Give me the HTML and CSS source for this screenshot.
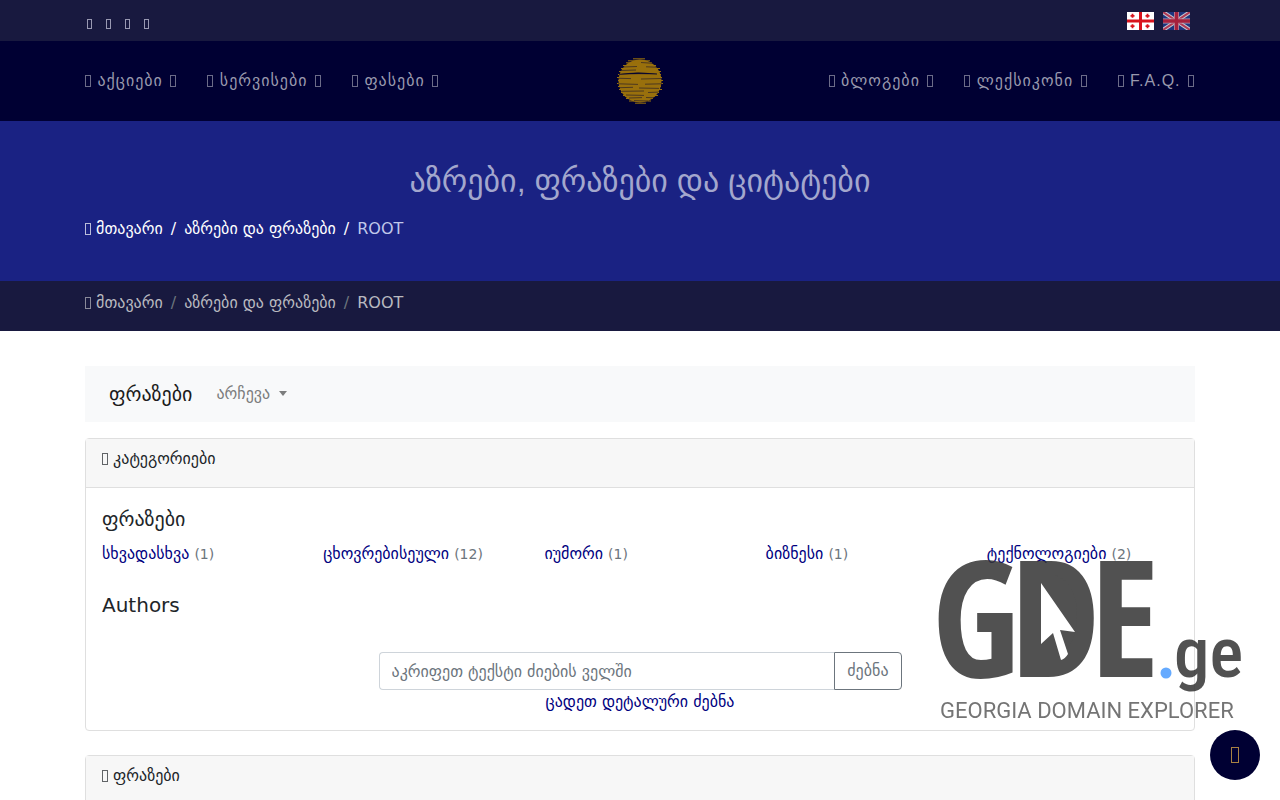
FILE: index.html
```
<!DOCTYPE html>
<html lang="ka">
<head>
  <meta charset="UTF-8">
  <meta name="viewport" content="width=device-width, initial-scale=1">
  <title>აზრები, ფრაზები და ციტატები</title>
  <link rel="stylesheet" href="styles.css">
</head>
<body>

  <!-- Top bar -->
  <div class="topbar">
    <div class="container topbar-inner">
      <div class="social">
        <a href="#" aria-label="Facebook"><i class="glyph"></i></a>
        <a href="#" aria-label="Twitter"><i class="glyph"></i></a>
        <a href="#" aria-label="YouTube"><i class="glyph"></i></a>
        <a href="#" aria-label="Instagram"><i class="glyph"></i></a>
      </div>
      <div class="langs">
        <a href="#" aria-label="ქართული">
          <svg width="27" height="18" viewBox="0 0 27 18">
            <rect width="27" height="18" fill="#fff"/>
            <path d="M12 0h3v18h-3zM0 7.5h27v3H0z" fill="#d9141e"/>
            <path d="M4.600 1.800h1.800v1.100h1.100v1.800H6.400v1.100H4.600V4.700H3.500V2.900h1.100zM19.600 1.800h1.800v1.100h1.100v1.800h-1.100v1.100h-1.800V4.700h-1.100V2.900h1.100zM4.600 12.200h1.800v1.100h1.100v1.800H6.400v1.100H4.600v-1.100H3.500v-1.800h1.100zM19.600 12.200h1.800v1.100h1.100v1.800h-1.100v1.100h-1.800v-1.100h-1.100v-1.800h1.100z" fill="#d9141e"/>
          </svg>
        </a>
        <a href="#" class="lang-off" aria-label="English">
          <svg width="27" height="18" viewBox="0 0 27 18">
            <rect width="27" height="18" fill="#1c3f94"/>
            <path d="M0 0l27 18M27 0L0 18" stroke="#fff" stroke-width="4"/>
            <path d="M0 0l27 18M27 0L0 18" stroke="#e0435a" stroke-width="2"/>
            <path d="M13.500 0v18M0 9h27" stroke="#f3c3d0" stroke-width="5"/>
            <path d="M13.500 0v18M0 9h27" stroke="#d5233c" stroke-width="3.600"/>
          </svg>
        </a>
      </div>
    </div>
  </div>

  <!-- Main menu -->
  <nav class="menu">
    <div class="container menu-inner">
      <div class="menu-side">
        <a href="#"><i class="glyph"></i> აქციები <i class="glyph"></i></a>
        <a href="#"><i class="glyph"></i> სერვისები <i class="glyph"></i></a>
        <a href="#"><i class="glyph"></i> ფასები <i class="glyph"></i></a>
      </div>
      <a href="#" class="logo" aria-label="მთავარი">
        <svg width="46" height="46" viewBox="0 0 46 46">
          <circle cx="23" cy="23" r="21.500" fill="#99700c"/>
          <g stroke="#99700c" stroke-width="1">
            <path d="M16 .800h12M11 2.800h22M9 4.800h26M6 7.500h33M4 10.500h39M2 13.500h42M1 16.500h43M0 19.500h45M1 22.500h45M0 25.500h46M1 28.500h43M2 31.500h43M4 34.500h38M6 37.500h35M9 40.500h27M12 43h22M18 45.200h11"/>
          </g>
          <g stroke="#000033" stroke-width=".500">
            <path d="M24 4.500l12 .800M6 9l14-.500M29 8.800l11 .400M3 12.500l16-.500M1 25.800l20 .600M28 26.200l17-.400M2 20.300l12 .300M24 21l20-.500M2 29.700l14-.400M22 30l20 .400M5 33.300l22-.300M31 34.500l10-.400M9 37l18 .400M12 40l13-.400M29 39.500l8 .300M17 42.600l14 .400"/>
            <path d="M2 16.300q18-3 38-.300q-18-.800-38 .300z" fill="#000033"/>
          </g>
        </svg>
      </a>
      <div class="menu-side menu-right">
        <a href="#"><i class="glyph"></i> ბლოგები <i class="glyph"></i></a>
        <a href="#"><i class="glyph"></i> ლექსიკონი <i class="glyph"></i></a>
        <a href="#"><i class="glyph"></i> F.A.Q. <i class="glyph"></i></a>
      </div>
    </div>
  </nav>

  <!-- Page title -->
  <header class="hero">
    <div class="container">
      <h1>აზრები, ფრაზები და ციტატები</h1>
      <ol class="breadcrumb">
        <li><a href="#"><i class="glyph"></i> მთავარი</a></li>
        <li><a href="#">აზრები და ფრაზები</a></li>
        <li class="active">ROOT</li>
      </ol>
    </div>
  </header>
  <div class="crumbbar">
    <div class="container">
      <ol class="breadcrumb">
        <li><a href="#"><i class="glyph"></i> მთავარი</a></li>
        <li><a href="#">აზრები და ფრაზები</a></li>
        <li>ROOT</li>
      </ol>
    </div>
  </div>

  <main class="container content">
    <nav class="subnav">
      <a href="#" class="brand">ფრაზები</a>
      <a href="#" class="dropdown">არჩევა</a>
    </nav>

    <section class="card">
      <div class="card-header"><i class="glyph"></i> კატეგორიები</div>
      <div class="card-body">
        <h2>ფრაზები</h2>
        <div class="categories">
          <div><a href="#">სხვადასხვა</a> <small>(1)</small></div>
          <div><a href="#">ცხოვრებისეული</a> <small>(12)</small></div>
          <div><a href="#">იუმორი</a> <small>(1)</small></div>
          <div><a href="#">ბიზნესი</a> <small>(1)</small></div>
          <div><a href="#">ტექნოლოგიები</a> <small>(2)</small></div>
        </div>
        <h2>Authors</h2>
        <form class="search">
          <div class="search-group">
            <input type="text" aria-label="ძებნა" placeholder="აკრიფეთ ტექსტი ძიების ველში">
            <button type="button">ძებნა</button>
          </div>
          <a href="#">ცადეთ დეტალური ძებნა</a>
        </form>
      </div>
    </section>

    <section class="card">
      <div class="card-header"><i class="glyph"></i> ფრაზები</div>
      <div class="card-body"></div>
    </section>
  </main>

  <!-- Watermark -->
  <svg class="watermark" width="310" height="175" viewBox="0 0 310 175">
    <g class="wm-big">
      <text x="-3" y="127">G</text>
      <text x="75" y="127">D</text>
      <text x="155" y="127">E</text>
    </g>
    <text class="wm-ge" x="239" y="127">ge</text>
    <circle cx="231" cy="123" r="5.500" fill="#4a9cff"/>
    <path d="M100 25h20q22 8 22 40t-22 45h-20z" fill="#333"/>
    <path d="M106 33l34 49-15-2 8 24q-3 5-7 6l-8-27-12 11z" fill="#fff"/>
    <text class="wm-sub" x="5" y="168">GEORGIA DOMAIN EXPLORER</text>
  </svg>

  <a href="#" class="to-top" aria-label="Top"><i class="glyph"></i></a>

</body>
</html>
```
FILE: styles.css
```
* {
  box-sizing: border-box;
}
body {
  margin: 0;
  font-family: "DejaVu Sans", sans-serif;
  font-size: 16px;
  line-height: 24px;
  color: #212529;
  background: #fff;
  overflow-x: hidden;
}
a {
  color: #000080;
  text-decoration: none;
}
.container {
  width: 100%;
  max-width: 1140px;
  margin: 0 auto;
  padding: 0 15px;
}
/* empty box glyph */
.glyph {
  display: inline-block;
  width: 6px;
  height: 12px;
  border: 1px solid currentColor;
  vertical-align: -1px;
  opacity: 0.7;
}

.topbar {
  background: #18193f;
}
.topbar-inner {
  display: flex;
  justify-content: space-between;
  align-items: center;
  height: 41px;
}
.social {
  display: flex;
  gap: 14px;
  padding: 6px 2px 0;
}
.social a {
  display: flex;
  color: #d0d0e4;
}
.social .glyph {
  width: 5px;
  height: 10px;
}
.langs {
  display: flex;
  gap: 9px;
  padding-right: 5px;
}
.langs a {
  display: flex;
}
.lang-off {
  opacity: 0.75;
}

.menu {
  background: #000033;
}
.menu-inner {
  display: flex;
  align-items: center;
  height: 80px;
}
.menu-side {
  display: flex;
  flex: 1;
  gap: 30px;
  font-family: "Liberation Sans", "DejaVu Sans", sans-serif;
  letter-spacing: 1px;
}
.menu-side a {
  color: #9999ad;
  white-space: nowrap;
}
.menu-side .glyph {
  margin-right: 1px;
}
.menu-side .glyph:last-child {
  margin-left: 2px;
}
.menu-right {
  justify-content: flex-end;
}
.logo {
  display: flex;
}

.hero {
  min-height: 160px;
  padding-top: 40px;
  background: #1a2283;
}
.hero h1 {
  margin: 0 0 16px;
  font-family: "Liberation Sans", "DejaVu Sans", sans-serif;
  font-size: 32px;
  font-weight: normal;
  line-height: 40px;
  text-align: center;
  color: #a3a7cd;
}
.breadcrumb {
  display: flex;
  flex-wrap: wrap;
  margin: 0;
  padding: 0;
  list-style: none;
}
.breadcrumb li + li::before {
  content: "/";
  padding: 0 8px;
}
.hero .breadcrumb,
.hero .breadcrumb a {
  color: #fff;
}
.hero .breadcrumb .active {
  color: #c0c8ea;
}
.hero .breadcrumb .active::before {
  color: #fff;
}
.crumbbar {
  padding: 10px 0 16px;
  background: #18193f;
}
.crumbbar .breadcrumb,
.crumbbar .breadcrumb a {
  color: #b9b9c0;
}
.crumbbar li + li::before {
  color: #6c757d;
}

.content {
  padding-top: 35px;
}
.subnav {
  display: flex;
  align-items: center;
  gap: 24px;
  margin-bottom: 16px;
  padding: 8px 24px;
  min-height: 56px;
  background: #f8f9fa;
}
.brand {
  font-size: 20px;
  color: #1c1c1c;
}
.dropdown {
  color: #7c7d7d;
}
.dropdown::after {
  content: "";
  display: inline-block;
  margin-left: 9px;
  vertical-align: 3px;
  border-top: 5px solid;
  border-left: 4px solid transparent;
  border-right: 4px solid transparent;
}

.card {
  margin-bottom: 24px;
  border: 1px solid #dfdfdf;
  border-radius: 4px;
}
.card-header {
  padding: 8px 16px 16px;
  border-bottom: 1px solid #dfdfdf;
  background: #f7f7f7;
}
.card-body {
  padding: 16px;
}
.card h2 {
  margin: 0 0 8px;
  font-size: 20px;
  font-weight: normal;
  line-height: 30px;
}
.categories {
  display: grid;
  grid-template-columns: repeat(5, 1fr);
  margin: 0 -15px 24px;
}
.categories div {
  padding: 0 15px;
  white-space: nowrap;
}
.categories small {
  font-size: 14px;
  color: #6c757d;
}
.search {
  display: flex;
  flex-direction: column;
  align-items: center;
  margin-top: 32px;
}
.search-group {
  display: flex;
  width: 100%;
  max-width: 523px;
}
.search input,
.search button {
  height: 38px;
  padding: 6px 12px;
  font: inherit;
  background: #fff;
}
.search input {
  flex: 1;
  min-width: 0;
  border: 1px solid #ced4da;
  border-right: 0;
  border-radius: 4px 0 0 4px;
}
.search input::placeholder {
  color: #6c757d;
  opacity: 1;
}
.search button {
  border: 1px solid #6c757d;
  border-radius: 0 4px 4px 0;
  color: #6c757d;
}

.watermark {
  position: fixed;
  right: 35px;
  bottom: 75px;
  opacity: 0.85;
  pointer-events: none;
}
.wm-big {
  font: bold 162px "Open Sans Condensed", "Roboto Condensed", sans-serif;
  fill: #333;
}
.wm-ge {
  font: 500 71px "Roboto Condensed", sans-serif;
  fill: #333;
}
.wm-sub {
  font: 22px Roboto, sans-serif;
  fill: #5c5c5c;
}
.to-top {
  position: fixed;
  right: 20px;
  bottom: 20px;
  display: flex;
  justify-content: center;
  align-items: center;
  width: 50px;
  height: 50px;
  border-radius: 50%;
  background: #000033;
  color: #f0b848;
}
.to-top .glyph {
  width: 8px;
  height: 16px;
}
```
